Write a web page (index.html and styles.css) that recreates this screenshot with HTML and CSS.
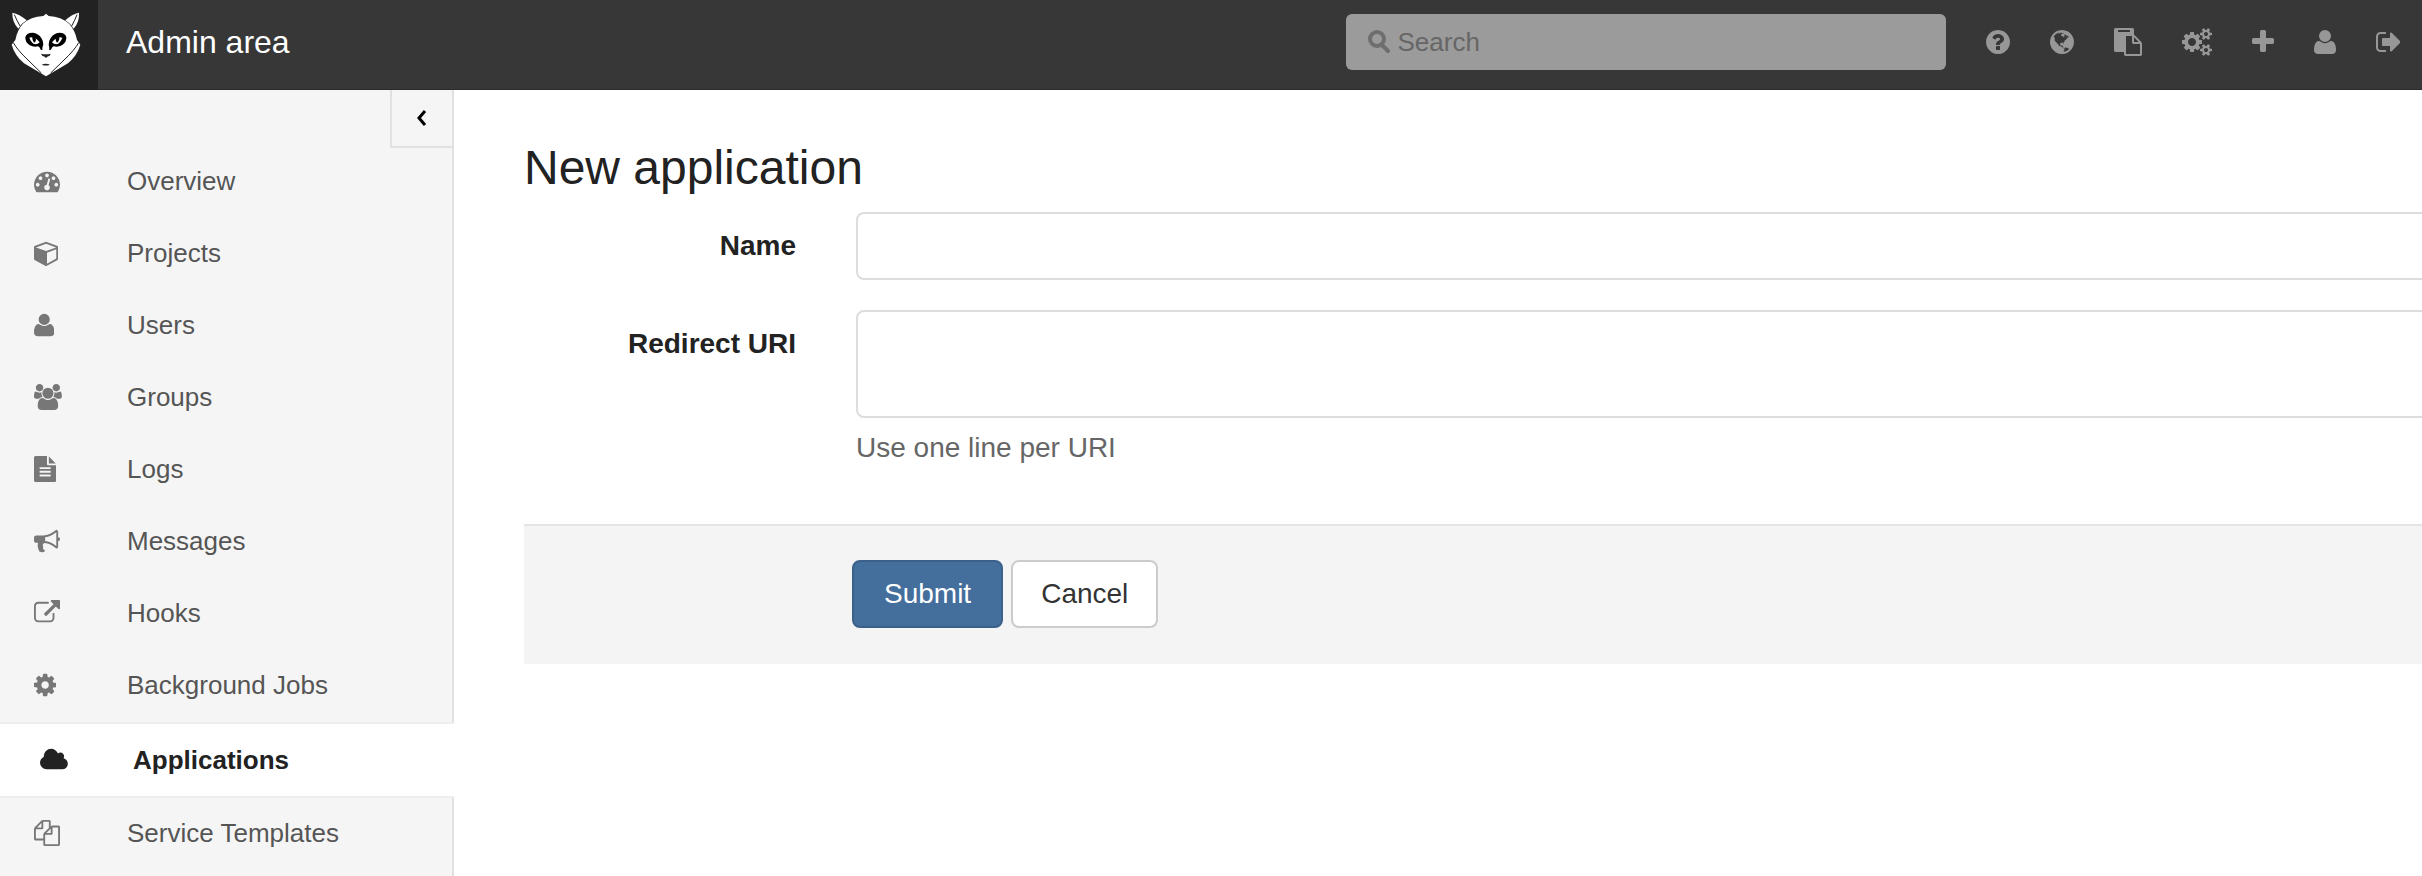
FILE: index.html
```html
<!DOCTYPE html>
<html lang="en">
<head>
  <meta charset="UTF-8" />
  <meta name="viewport" content="width=device-width, initial-scale=1.0"/>
  <title>New application</title>
  <link rel="stylesheet" href="styles.css">
</head>
<body>

  <header class="navbar">
    <a href="#" class="logo" aria-label="Dashboard">
      <svg viewBox="0 0 294 270">
        <path fill="#fff" d="M37 38Q58 42 80 61Q64 70 55 86Q36 66 37 38zM237 38Q216 42 196 61Q211 70 221 86Q239 66 237 38z"/>
        <path fill="none" stroke="#222" stroke-width="3" d="M43 44Q50 60 60 78M231 44Q225 60 215 78"/>
        <path fill="#fff" d="M130 48L138 41L146 48Q184 50 208 72Q226 92 231 120L241 134Q232 166 204 190Q174 208 138 229Q102 208 72 190Q44 166 35 134L46 120Q51 92 68 72Q92 50 130 48z"/>
        <path fill="none" stroke="#222" stroke-width="3" d="M40 128Q52 150 84 180L124 219M236 128Q224 150 192 180L152 219"/>
        <path fill="#000" d="M76 112Q78 98 98 98Q116 100 124 114Q131 124 130 135Q127 138 127 151L122 149Q120 141 114 139Q100 142 88 135Q75 126 76 112zM199 112Q197 98 178 98Q160 100 152 114Q145 124 146 135Q148 138 148 151L153 149Q155 141 161 139Q175 142 187 135Q200 126 199 112z"/>
        <path fill="#fff" d="M88 113Q100 108 112 119L119 127Q114 133 106 133Q94 130 88 113zM187 113Q175 108 163 119L156 127Q161 133 169 133Q181 130 187 113z"/>
        <path fill="#000" d="M97 110Q106 110 108 118Q108 126 104 128Q96 122 97 110zM178 110Q169 110 167 118Q167 126 171 128Q179 122 178 110z"/>
        <path fill="#222" d="M123 161Q138 165 152 161Q151 168 142 170L138 174L134 170Q125 168 123 161zM125 194Q138 188 150 194Q138 199 125 194z"/>
      </svg>
    </a>
    <div class="navbar-inner">
      <div class="title">Admin area</div>
      <form class="search">
        <svg class="search-icon" viewBox="0 0 22 24"><ellipse cx="9" cy="9" rx="7" ry="7" /><path d="M14 15l6 6"/></svg>
        <input type="text" placeholder="Search" aria-label="Search">
      </form>
      <nav class="nav-icons">
        <a href="#" aria-label="Help"><svg class="icon" viewBox="128 0 1536 1792"><path d="M1024 1376v-192q0-14-9-23t-23-9h-192q-14 0-23 9t-9 23v192q0 14 9 23t23 9h192q14 0 23-9t9-23zm256-672q0-88-55.5-163t-138.5-116-170-41q-243 0-371 213-15 24 8 42l132 100q7 6 19 6 16 0 25-12 53-68 86-92 34-24 86-24 48 0 85.5 26t37.5 59q0 38-20 61t-68 45q-63 28-115.5 86.5t-52.5 125.5v36q0 14 9 23t23 9h192q14 0 23-9t9-23q0-19 21.5-49.5t54.5-49.5q32-18 49-28.500t46-35 44.500-48 28-60.500 12.500-81zm384 192q0 209-103 385.500t-279.500 279.500-385.500 103-385.500-103-279.500-279.500-103-385.500 103-385.500 279.500-279.500 385.500-103 385.500 103 279.500 279.500 103 385.500z"/></svg></a>
        <a href="#" aria-label="Explore"><svg class="icon" viewBox="128 0 1536 1792"><path d="M896 128q209 0 385.500 103t279.500 279.500 103 385.500-103 385.500-279.500 279.500-385.500 103-385.500-103-279.500-279.500-103-385.500 103-385.500 279.500-279.500 385.500-103zm274 521q-2 1-9.500 9.500t-13.500 9.500q2 0 4.500-5t5-11 3.500-7q6-7 22-15 14-6 52-12 34-8 51 11-2-2 9.500-13t14.500-12q3-2 15-4.500t15-7.500l2-22q-12 1-17.500-7t-6.500-21q0 2-6 8 0-7-4.500-8t-11.500 1-9 1q-10-3-15-7.500t-8-16.500-4-15q-2-5-9.500-11t-9.500-10q-1-2-2.500-5.500t-3-6.500-4-5.500-5.500-2.500-7 5-7.500 10-4.500 5q-3-2-6-1.500t-4.500 1-4.500 3-5 3.500q-3 2-8.500 3t-8.500 2q15-5-1-11-10-4-16-3 9-4 7.500-12t-8.500-14h5q-1-4-8.500-8.500t-17.500-8.500-13-6q-8-5-34-9.500t-33-.5q-5 6-4.500 10.500t4 14 3.500 12.500q1 6-5.500 13t-6.500 12q0 7 14 15.500t10 21.500q-3 8-16 16t-16 12q-5 8-1.500 18.500t10.500 16.500q2 2 1.500 4t-3.500 4.500-5.500 4-6.500 3.500l-3 2q-11 5-20.500-6t-13.500-26q-7-25-16-30-23-8-29 1-5-13-41-26-25-9-58-4 6-1 0-15-7-15-19-12 3-6 4-17.500t1-13.500q3-13 12-23 1-1 7-8.500t9.500-13.500.5-6q35 4 50-11 5-5 11.500-17t10.500-17q9-6 14-5.500t14.500 5.500 14.500 5q14 1 15.500-11t-7.500-20q12 1 3-17-4-7-8-9-12-4-27 5-8 4 2 8-1-1-9.500 10.500t-16.500 17.500-16-5q-1-1-5.500-13.500t-9.500-13.500q-8 0-16 15 3-8-11-15t-24-8q19-12-8-27-7-4-20.500-5t-19.500 4q-5 7-5.500 11.500t5 8 10.500 5.500 11.500 4 8.500 3q14 10 8 14-2 1-8.500 3.500t-11.500 4.500-6 4q-3 4 0 14t-2 14q-5-5-9-17.500t-7-16.500q7 9-25 6l-10-1q-4 0-16 2t-20.500 1-13.500-8q-4-8 0-20 1-4 4-2-4-3-11-9.500t-10-8.500q-46 15-94 41 6 1 12-1 5-2 13-6.500t10-5.500q34-14 42-7l5-5q14 16 20 25-7-4-30-1-20 6-22 12 7 12 5 18-4-3-11.500-10t-14.500-11-15-5q-16 0-22 1-146 80-235 222 7 7 12 8 4 1 5 9t2.500 11 11.500-3q9 8 3 19 1-1 44 27 19 17 21 21 3 11-10 18-1-2-9-9t-9-4q-3 5 .5 18.500t10.500 12.500q-7 0-9.500 16t-2.500 35.500-1 23.500l2 1q-3 12 5.500 34.500t21.500 19.500q-13 3 20 43 6 8 8 9 3 2 12 7.500t15 10 10 10.500q4 5 10 22.500t14 23.500q-2 6 9.500 20t10.500 23q-1 0-2.500 1t-2.500 1q3 7 15.500 14t15.500 13q1 3 2 10t3 11 8 2q2-20-24-62-15-25-17-29-3-5-5.500-15.500t-4.500-14.500q2 0 6 1.500t8.500 3.500 7.500 4 2 3q-3 7 2 17.500t12 18.500 17 19 12 13q6 6 14 19.500t0 13.500q9 0 20 10.500t17 19.500q5 8 8 26t5 24q2 7 8.500 13.500t12.500 9.500l16 8 13 7q5 2 18.500 10.500t21.500 11.500q10 4 16 4t14.500-2.500 13.500-3.500q15-2 29 15t21 21q36 19 55 11-2 1 .5 7.500t8 15.500 9 14.500 5.500 8.500q5 6 18 15t18 15q6-4 7-9-3 8 7 20t18 10q14-3 14-32-31 15-49-18 0-1-2.500-5.500t-4-8.500-2.500-8.500 0-7.500 5-3q9 0 10-3.500t-2-12.500-4-13q-1-8-11-20t-12-15q-5 9-16 8t-16-9q0 1-1.500 5.500t-1.500 6.500q-13 0-15-1 1-3 2.500-17.500t3.500-22.500q1-4 5.500-12t7.500-14.500 4-12.500-4.500-9.500-17.500-2.500q-19 1-26 20-1 3-3 10.500t-5 11.500-9 7q-7 3-24 2t-24-5q-13-8-22.500-29t-9.500-37q0-10 2.500-26.500t3-25-5.500-24.500q3-2 9-9.500t10-10.500q2-1 4.500-1.500t4.500 0 4-1.500 3-6q-1-1-4-3-3-3-4-3 7 3 28.500-1.500t27.500 1.500q15 11 22-2 0-1-2.500-9.500t-.5-13.500q5 27 29 9 3 3 15.500 5t17.500 5q3 2 7 5.500t5.500 4.500 5-.5 8.500-6.500q10 14 12 24 11 40 19 44 7 3 11 2t4.500-9.500 0-14-1.500-12.500l-1-8v-18l-1-8q-15-3-18.500-12t1.500-18.500 15-18.500q1-1 8-3.500t15.500-6.500 12.500-8q21-19 15-35 7 0 11-9-1 0-5-3t-7.500-5-4.500-2q9-5 2-16 5-3 7.500-11t7.500-10q9 12 21 2 8-8 1-16 5-7 20.500-10.500t18.500-9.500q7 2 8-2t1-12 3-12q4-5 15-9t13-5l17-11q3-4 0-4 18 2 31-11 10-11-6-20 3-6-3-9.500t-15-5.500q3-1 11.500-.5t10.500-1.500q15-10-7-16-17-5-43 12zm-163 877q206-36 351-189-3-3-12.500-4.500t-12.500-3.500q-18-7-24-8 1-7-2.500-13t-8-9-12.500-8-11-7q-2-2-7-6t-7-5.500-7.500-4.500-8.500-2-10 1l-3 1q-3 1-5.500 2.500t-5.500 3-4 3 0 2.500q-21-17-36-22-5-1-11-5.500t-10.500-7-10-1.500-11.500 7q-5 5-6 15t-2 13q-7-5 0-17.500t2-18.500q-3-6-10.500-4.500t-12 4.500-11.500 8.500-9 6.500-8.500 5.500-8.500 7.500q-3 4-6 12t-5 11q-2-4-11.500-6.500t-9.500-5.500q2 10 4 35t5 38q7 31-12 48-27 25-29 40-4 22 12 26 0 7-8 20.500t-7 21.500q0 6 2 16z"/></svg></a>
        <a href="#" aria-label="Snippets"><svg class="icon" viewBox="0 0 1792 1792"><path d="M768 1664h896v-640h-416q-40 0-68-28t-28-68v-416h-384v1152zm256-1440v-64q0-13-9.500-22.500t-22.500-9.500h-704q-13 0-22.500 9.500t-9.500 22.500v64q0 13 9.500 22.500t22.500 9.500h704q13 0 22.500-9.500t9.500-22.500zm256 672h299l-299-299v299zm512 128v672q0 40-28 68t-68 28h-960q-40 0-68-28t-28-68v-160h-544q-40 0-68-28t-28-68v-1344q0-40 28-68t68-28h1088q40 0 68 28t28 68v328q21 13 36 28l408 408q28 28 48 76t20 88z"/></svg></a>
        <a href="#" aria-label="Admin area"><svg class="icon" viewBox="0 0 1920 1792"><path d="M896 896q0-106-75-181t-181-75-181 75-75 181 75 181 181 75 181-75 75-181zm768 512q0-52-38-90t-90-38-90 38-38 90q0 53 37.500 90.500t90.500 37.500 90.500-37.500 37.500-90.500zm0-1024q0-52-38-90t-90-38-90 38-38 90q0 53 37.500 90.500t90.500 37.500 90.500-37.500 37.500-90.500zm-384 421v185q0 10-7 19.500t-16 10.500l-155 24q-11 35-32 76 34 48 90 115 7 11 7 20 0 12-7 19-23 30-82.500 89.500t-78.500 59.500q-11 0-21-7l-115-90q-37 19-77 31-11 108-23 155-7 24-30 24h-186q-11 0-20-7.500t-10-17.500l-23-153q-34-10-75-31l-118 89q-7 7-20 7-11 0-21-8-144-133-144-160 0-9 7-19 10-14 41-53t47-61q-23-44-35-82l-152-24q-10-1-17-9.500t-7-19.500v-185q0-10 7-19.500t16-10.500l155-24q11-35 32-76-34-48-90-115-7-11-7-20 0-12 7-20 22-30 82-89t79-59q11 0 21 7l115 90q34-18 77-32 11-108 23-154 7-24 30-24h186q11 0 20 7.500t10 17.500l23 153q34 10 75 31l118-89q8-7 20-7 11 0 21 8 144 133 144 160 0 8-7 19-12 16-42 54t-45 60q23 48 34 82l152 23q10 2 17 10.500t7 19.500zm640 533v140q0 16-149 31-12 27-30 52 51 113 51 138 0 4-4 7-122 71-124 71-8 0-46-47t-52-68q-20 2-30 2t-30-2q-14 21-52 68t-46 47q-2 0-124-71-4-3-4-7 0-25 51-138-18-25-30-52-149-15-149-31v-140q0-16 149-31 13-29 30-52-51-113-51-138 0-4 4-7 4-2 35-20t59-34 30-16q8 0 46 46.500t52 67.500q20-2 30-2t30 2q51-71 92-112l6-2q4 0 124 70 4 3 4 7 0 25-51 138 17 23 30 52 149 15 149 31zm0-1024v140q0 16-149 31-12 27-30 52 51 113 51 138 0 4-4 7-122 71-124 71-8 0-46-47t-52-68q-20 2-30 2t-30-2q-14 21-52 68t-46 47q-2 0-124-71-4-3-4-7 0-25 51-138-18-25-30-52-149-15-149-31v-140q0-16 149-31 13-29 30-52-51-113-51-138 0-4 4-7 4-2 35-20t59-34 30-16q8 0 46 46.500t52 67.500q20-2 30-2t30 2q51-71 92-112l6-2q4 0 124 70 4 3 4 7 0 25-51 138 17 23 30 52 149 15 149 31z"/></svg></a>
        <a href="#" aria-label="New project"><svg class="icon" viewBox="192 0 1408 1792"><path d="M1600 736v192q0 40-28 68t-68 28h-416v416q0 40-28 68t-68 28h-192q-40 0-68-28t-28-68v-416h-416q-40 0-68-28t-28-68v-192q0-40 28-68t68-28h416v-416q0-40 28-68t68-28h192q40 0 68 28t28 68v416h416q40 0 68 28t28 68z"/></svg></a>
        <a href="#" aria-label="Profile"><svg class="icon" viewBox="192 0 1408 1792"><path d="M1600 1405q0 120-73 189.500t-194 69.500h-874q-121 0-194-69.500t-73-189.500q0-53 3.500-103.500t14-109 26.500-108.500 43-97.500 62-81 85.500-53.500 111.500-20q9 0 42 21.500t74.500 48 108 48 133.500 21.500 133.500-21.500 108-48 74.500-48 42-21.500q61 0 111.500 20t85.500 53.500 62 81 43 97.500 26.500 108.500 14 109 3.500 103.500zm-320-893q0 159-112.500 271.500t-271.500 112.500-271.500-112.500-112.500-271.500 112.500-271.500 271.500-112.500 271.500 112.500 112.500 271.500z"/></svg></a>
        <a href="#" aria-label="Sign out"><svg class="icon" viewBox="64 0 1568 1792"><path d="M704 1440q0 4 1 20t.5 26.500-3 23.500-10 19.500-20.500 6.500h-320q-119 0-203.500-84.500t-84.500-203.500v-704q0-119 84.500-203.500t203.500-84.500h320q13 0 22.500 9.500t9.500 22.500q0 4 1 20t.5 26.500-3 23.500-10 19.500-20.500 6.500h-320q-66 0-113 47t-47 113v704q0 66 47 113t113 47h312l11.500 1 11.500 3 8 5.500 7 9 2 13.500zm928-544q0 26-19 45l-544 544q-19 19-45 19t-45-19-19-45v-288h-448q-26 0-45-19t-19-45v-384q0-26 19-45t45-19h448v-288q0-26 19-45t45-19 45 19l544 544q19 19 19 45z"/></svg></a>
      </nav>
    </div>
  </header>

  <div class="page">
    <aside class="sidebar">
      <button class="toggle" aria-label="Collapse sidebar">
        <svg viewBox="0 0 10 16"><path d="M8 1L2 8l6 7"/></svg>
      </button>
      <ul class="menu">
        <li><a href="#">
          <svg class="icon" viewBox="0 0 1792 1792"><path d="M384 1152q0-53-37.500-90.500t-90.500-37.500-90.500 37.500-37.500 90.500 37.500 90.500 90.500 37.500 90.500-37.500 37.500-90.500zm192-448q0-53-37.500-90.500t-90.500-37.500-90.500 37.500-37.500 90.500 37.500 90.500 90.500 37.500 90.500-37.500 37.500-90.500zm428 481l101-382q6-26-7.500-48.500t-38.500-29.500-48 6.500-30 39.500l-101 382q-60 5-107 43.500t-63 98.500q-20 77 20 146t117 89 146-20 89-117q16-60-6-117t-72-91zm660-33q0-53-37.500-90.500t-90.500-37.500-90.500 37.500-37.500 90.500 37.500 90.500 90.500 37.500 90.500-37.500 37.500-90.500zm-640-640q0-53-37.500-90.500t-90.500-37.500-90.500 37.500-37.500 90.500 37.500 90.500 90.500 37.500 90.500-37.500 37.500-90.500zm448 192q0-53-37.500-90.500t-90.500-37.500-90.500 37.500-37.500 90.500 37.500 90.500 90.500 37.500 90.500-37.500 37.500-90.500zm320 448q0 261-141 483-19 29-54 29h-1402q-35 0-54-29-141-221-141-483 0-182 71-348t191-286 286-191 348-71 348 71 286 191 191 286 71 348z"/></svg>
          <span>Overview</span></a></li>
        <li><a href="#">
          <svg class="icon" viewBox="0 0 1664 1792"><path d="M896 1629l640-349v-636l-640 233v752zm-64-865l698-254-698-254-698 254zm832-252v768q0 35-18 65t-49 47l-704 384q-28 16-61 16t-61-16l-704-384q-31-17-49-47t-18-65v-768q0-40 23-73t61-47l704-256q22-8 44-8t44 8l704 256q38 14 61 47t23 73z"/></svg>
          <span>Projects</span></a></li>
        <li><a href="#">
          <svg class="icon" viewBox="192 0 1408 1792"><path d="M1600 1405q0 120-73 189.500t-194 69.500h-874q-121 0-194-69.500t-73-189.500q0-53 3.500-103.500t14-109 26.500-108.500 43-97.500 62-81 85.500-53.500 111.500-20q9 0 42 21.500t74.500 48 108 48 133.500 21.500 133.500-21.500 108-48 74.500-48 42-21.500q61 0 111.500 20t85.500 53.500 62 81 43 97.500 26.500 108.500 14 109 3.500 103.500zm-320-893q0 159-112.500 271.500t-271.500 112.500-271.500-112.500-112.500-271.500 112.500-271.500 271.500-112.500 271.500 112.500 112.500 271.500z"/></svg>
          <span>Users</span></a></li>
        <li><a href="#">
          <svg class="icon" viewBox="0 0 1920 1792"><path d="M593 896q-162 5-265 128h-134q-82 0-138-40.500t-56-118.500q0-353 124-353 6 0 43.500 21t97.500 42.500 119 21.500q67 0 133-23-5 37-5 66 0 139 81 256zm1071 637q0 120-73 189.500t-194 69.500h-874q-121 0-194-69.500t-73-189.500q0-53 3.500-103.500t14-109 26.500-108.500 43-97.500 62-81 85.500-53.500 111.500-20q10 0 43 21.500t73 48 107 48 135 21.500 135-21.500 107-48 73-48 43-21.500q61 0 111.500 20t85.500 53.500 62 81 43 97.500 26.500 108.500 14 109 3.500 103.500zm-1024-1277q0 106-75 181t-181 75-181-75-75-181 75-181 181-75 181 75 75 181zm704 384q0 159-112.500 271.500t-271.500 112.500-271.500-112.500-112.500-271.500 112.500-271.500 271.500-112.500 271.500 112.500 112.500 271.500zm576 225q0 78-56 118.500t-138 40.500h-134q-103-123-265-128 81-117 81-256 0-29-5-66 66 23 133 23 59 0 119-21.500t97.500-42.500 43.500-21q124 0 124 353zm-128-609q0 106-75 181t-181 75-181-75-75-181 75-181 181-75 181 75 75 181z"/></svg>
          <span>Groups</span></a></li>
        <li><a href="#">
          <svg class="icon" viewBox="0 0 1536 1792"><path d="M1468 476q14 14 28 36h-472v-472q22 14 36 28zm-476 164h544v1056q0 40-28 68t-68 28h-1344q-40 0-68-28t-28-68v-1600q0-40 28-68t68-28h800v544q0 40 28 68t68 28zm160 736v-64q0-14-9-23t-23-9h-704q-14 0-23 9t-9 23v64q0 14 9 23t23 9h704q14 0 23-9t9-23zm0-256v-64q0-14-9-23t-23-9h-704q-14 0-23 9t-9 23v64q0 14 9 23t23 9h704q14 0 23-9t9-23zm0-256v-64q0-14-9-23t-23-9h-704q-14 0-23 9t-9 23v64q0 14 9 23t23 9h704q14 0 23-9t9-23z"/></svg>
          <span>Logs</span></a></li>
        <li><a href="#">
          <svg class="icon" viewBox="0 0 1792 1792"><path d="M1664 640q53 0 90.500 37.500t37.500 90.500-37.500 90.500-90.500 37.500v384q0 52-38 90t-90 38q-417-347-812-380-58 19-91 66t-31 100.500 40 92.500q-20 33-23 65.500t6 58 33.500 55 48 50 61.500 50.500q-29 58-111.500 83t-168.500 11.500-132-55.500q-7-23-29.500-87.500t-32-94.500-23-89-15-101 3.500-98.500 22-110.500h-122q-66 0-113-47t-47-113v-192q0-66 47-113t113-47h480q435 0 896-384 52 0 90 38t38 90v384zm-128 604v-954q-394 302-768 343v270q377 42 768 341z"/></svg>
          <span>Messages</span></a></li>
        <li><a href="#">
          <svg class="icon" viewBox="0 0 1792 1792"><path d="M1408 928v320q0 119-84.500 203.500t-203.500 84.500h-832q-119 0-203.500-84.500t-84.500-203.500v-832q0-119 84.500-203.500t203.500-84.500h704q14 0 23 9t9 23v64q0 14-9 23t-23 9h-704q-66 0-113 47t-47 113v832q0 66 47 113t113 47h832q66 0 113-47t47-113v-320q0-14 9-23t23-9h64q14 0 23 9t9 23zm384-864v512q0 26-19 45t-45 19-45-19l-176-176-652 652q-10 10-23 10t-23-10l-114-114q-10-10-10-23t10-23l652-652-176-176q-19-19-19-45t19-45 45-19h512q26 0 45 19t19 45z"/></svg>
          <span>Hooks</span></a></li>
        <li><a href="#">
          <svg class="icon" viewBox="0 0 1536 1792"><path d="M1024 896q0-106-75-181t-181-75-181 75-75 181 75 181 181 75 181-75 75-181zm512-109v222q0 12-8 23t-20 13l-185 28q-19 54-39 91 35 50 107 138 10 12 10 25t-9 23q-27 37-99 108t-94 71q-12 0-26-9l-138-108q-44 23-91 38-16 136-29 186-7 28-36 28h-222q-14 0-24.500-8.500t-11.500-21.500l-28-184q-49-16-90-37l-141 107q-10 9-25 9-14 0-25-11-126-114-165-168-7-10-7-23 0-12 8-23 15-21 51-66.500t54-70.500q-27-50-41-99l-183-27q-13-2-21-12.500t-8-23.500v-222q0-12 8-23t19-13l186-28q14-46 39-92-40-57-107-138-10-12-10-24 0-10 9-23 26-36 98.500-107.500t94.500-71.500q13 0 26 10l138 107q44-23 91-38 16-136 29-186 7-28 36-28h222q14 0 24.500 8.500t11.500 21.500l28 184q49 16 90 37l142-107q9-9 24-9 13 0 25 10 129 119 165 170 7 8 7 22 0 12-8 23-15 21-51 66.500t-54 70.500q26 50 41 98l183 28q13 2 21 12.500t8 23.500z"/></svg>
          <span>Background Jobs</span></a></li>
        <li class="active"><a href="#">
          <svg class="icon" viewBox="0 0 1920 1792"><path d="M1920 1152q0 159-112.500 271.500t-271.500 112.500h-1088q-185 0-316.500-131.500t-131.500-316.500q0-132 71-241.500t187-163.500q-2-28-2-43 0-212 150-362t362-150q158 0 286.500 88t187.500 230q70-62 166-62 106 0 181 75t75 181q0 75-41 138 129 30 213 134.500t84 239.500z"/></svg>
          <span>Applications</span></a></li>
        <li><a href="#">
          <svg class="icon" viewBox="0 0 1792 1792"><path d="M1696 384q40 0 68 28t28 68v1216q0 40-28 68t-68 28h-960q-40 0-68-28t-28-68v-288h-544q-40 0-68-28t-28-68v-672q0-40 20-88t48-76l408-408q28-28 76-48t88-20h416q40 0 68 28t28 68v328q68-40 128-40h416zm-544 213l-299 299h299v-299zm-640-384l-299 299h299v-299zm196 647l316-316v-416h-384v416q0 40-28 68t-68 28h-416v640h512v-256q0-40 20-88t48-76zm956 804v-1152h-384v416q0 40-28 68t-68 28h-416v640h896z"/></svg>
          <span>Service Templates</span></a></li>
      </ul>
    </aside>

    <main class="content">
      <h1>New application</h1>
      <form class="app-form">
        <div class="form-group">
          <label for="name">Name</label>
          <div class="field">
            <input type="text" id="name">
          </div>
        </div>
        <div class="form-group">
          <label for="redirect">Redirect URI</label>
          <div class="field">
            <textarea id="redirect"></textarea>
            <p class="help">Use one line per URI</p>
          </div>
        </div>
        <div class="form-actions">
          <button type="submit" class="btn btn-primary">Submit</button>
          <a href="#" class="btn">Cancel</a>
        </div>
      </form>
    </main>
  </div>

</body>
</html>
```

FILE: styles.css
```css
* {
  box-sizing: border-box;
}

body {
  margin: 0;
  min-height: 100vh;
  display: flex;
  flex-direction: column;
  font-family: "Liberation Sans", Arial, sans-serif;
  font-size: 28px;
  color: #222;
  background: #fff;
}

a {
  color: inherit;
  text-decoration: none;
}

.icon {
  display: block;
  height: 28px;
  width: auto;
  fill: currentColor;
}

/* top bar */
.navbar {
  display: flex;
  height: 90px;
  background: #373737;
  border-bottom: 1px solid #2f292e;
}

.logo {
  width: 98px;
  height: 90px;
  background: #222;
}

.logo svg {
  display: block;
  width: 98px;
  height: 90px;
}

.navbar-inner {
  flex: 1;
  display: flex;
  align-items: center;
  gap: 40px;
  height: 84px;
  padding: 0 22px 0 28px;
}

.title {
  flex: 1;
  font-size: 32px;
  color: #fff;
}

.search {
  position: relative;
  width: 600px;
}

.search input {
  display: block;
  width: 100%;
  height: 56px;
  padding: 0 20px 0 52px;
  border: 0;
  border-radius: 6px;
  background: #9b9b9b;
  font-family: inherit;
  font-size: 26px;
  color: #333;
}

.search input::placeholder {
  color: #666;
}

.search-icon {
  position: absolute;
  left: 22px;
  top: 16px;
  width: 22px;
  height: 24px;
  fill: none;
  stroke: #6e6e6e;
  stroke-width: 4;
  stroke-linecap: round;
}

.nav-icons {
  display: flex;
  gap: 40px;
  color: #979797;
}

/* sidebar */
.page {
  flex: 1;
  display: flex;
}

.sidebar {
  flex: none;
  width: 454px;
  display: flex;
  flex-direction: column;
  background: #f5f5f5;
  border-right: 2px solid #e1e1e1;
}

.toggle {
  align-self: flex-end;
  display: flex;
  align-items: center;
  justify-content: center;
  width: 62px;
  height: 58px;
  margin-bottom: -2px;
  padding: 0;
  border: 0;
  border-left: 2px solid #e1e1e1;
  border-bottom: 2px solid #e1e1e1;
  background: transparent;
}

.toggle svg {
  width: 12px;
  height: 16px;
  fill: none;
  stroke: #000;
  stroke-width: 3;
}

.menu {
  list-style: none;
  margin: 0;
  padding: 0;
  font-size: 26px;
  color: #555;
}

.menu a {
  display: grid;
  grid-template-columns: 93px 1fr;
  align-items: center;
  height: 72px;
  padding: 0 0 2px 34px;
}

.menu .icon {
  height: 26px;
  color: #777;
}

.menu .active {
  margin-right: -2px;
  border-top: 2px solid #eee;
  border-bottom: 2px solid #eee;
  border-radius: 2px;
  background: #fff;
  font-weight: bold;
  color: #222;
}

.menu .active a {
  padding: 0 0 0 40px;
}

.menu .active .icon {
  color: #222;
}

/* main form, the fields run off the right edge */
.content {
  flex: 1;
  min-width: 0;
  padding: 50px 0 0 70px;
  overflow: hidden;
}

h1 {
  margin: 0 0 16px;
  font-size: 48px;
  line-height: 56px;
  font-weight: normal;
}

.app-form {
  margin-right: -40px;
}

.form-group {
  display: grid;
  grid-template-columns: 272px 1fr;
  column-gap: 60px;
  margin-bottom: 30px;
}

.form-group label {
  padding-top: 16px;
  line-height: 36px;
  font-weight: bold;
  text-align: right;
}

.field input,
.field textarea {
  display: block;
  width: 100%;
  height: 68px;
  padding: 12px 24px;
  border: 2px solid #ddd;
  border-radius: 8px;
  background: #fff;
  font-family: inherit;
  font-size: 28px;
  color: #222;
  resize: none;
}

.field textarea {
  height: 108px;
}

.help {
  margin: 10px 0 26px;
  line-height: 40px;
  color: #666;
}

.form-actions {
  display: flex;
  gap: 8px;
  padding: 34px 0 36px 328px;
  border-top: 2px solid #e5e5e5;
  background: #f4f4f4;
}

.btn {
  height: 68px;
  padding: 0 28px;
  border: 2px solid #ccc;
  border-radius: 8px;
  background: #fff;
  font-family: inherit;
  font-size: 28px;
  line-height: 64px;
  color: #333;
}

.btn-primary {
  padding: 0 30px;
  border-color: #3b618b;
  background: #446e9b;
  color: #fff;
}
```
